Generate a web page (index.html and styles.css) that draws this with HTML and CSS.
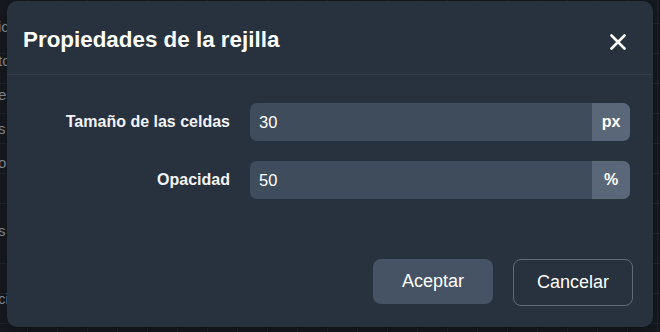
FILE: index.html
```html
<!DOCTYPE html>
<html lang="es">
<head>
<meta charset="utf-8">
<title>Propiedades de la rejilla</title>
<link rel="stylesheet" href="styles.css">
</head>
<body>
<div class="page">
  <ul class="sidebar">
    <li>ic</li>
    <li>to</li>
    <li>es</li>
    <li>s</li>
    <li>or</li>
    <li></li>
    <li>s</li>
    <li></li>
    <li>ció</li>
  </ul>

  <div class="modal" role="dialog" aria-labelledby="dlg-title">
    <div class="modal-header">
      <h2 id="dlg-title" class="modal-title">Propiedades de la rejilla</h2>
      <button class="close-btn" aria-label="Cerrar">
        <svg width="16" height="16" viewBox="0 0 16 16" aria-hidden="true">
          <path d="M1.5 1.5 L14.5 14.5 M14.5 1.5 L1.5 14.5" stroke="#ffffff" stroke-width="2.6" stroke-linecap="round" fill="none"/>
        </svg>
      </button>
    </div>
    <div class="modal-body">
      <label class="field-label" for="cell-size">Tamaño de las celdas</label>
      <div class="input-group">
        <input id="cell-size" class="input" type="text" value="30">
        <span class="addon">px</span>
      </div>
      <label class="field-label" for="opacity">Opacidad</label>
      <div class="input-group">
        <input id="opacity" class="input" type="text" value="50">
        <span class="addon">%</span>
      </div>
    </div>
    <div class="modal-footer">
      <button class="btn btn-primary">Aceptar</button>
      <button class="btn btn-outline">Cancelar</button>
    </div>
  </div>
</div>
</body>
</html>
```

FILE: styles.css
```css
* {
  box-sizing: border-box;
}

html, body {
  margin: 0;
  padding: 0;
}

body {
  width: 660px;
  height: 332px;
  overflow: hidden;
  background-color: #161a20;
  font-family: "Liberation Sans", Arial, sans-serif;
  color: #ffffff;
}

.page {
  position: relative;
  width: 660px;
  height: 332px;
  background-color: #161a20;
  background-image:
    linear-gradient(to right, #1f242c 1px, transparent 1px),
    linear-gradient(to bottom, #20252d 1px, transparent 1px);
  background-size: 30px 30px;
  background-position: 27px 23px;
}

.sidebar {
  list-style: none;
  margin: 0;
  padding: 10px 0 0 0;
  display: flex;
  flex-direction: column;
}

.sidebar li {
  height: 34px;
  line-height: 34px;
  padding-left: 0;
  margin-left: -2px;
  font-size: 15px;
  color: #8a9199;
  white-space: nowrap;
}

.modal {
  position: absolute;
  left: 7px;
  top: 1px;
  width: 646px;
  height: 326px;
  background-color: #28313e;
  border-radius: 10px;
  display: flex;
  flex-direction: column;
  box-shadow: 0 4px 16px rgba(0, 0, 0, 0.35);
}

.modal-header {
  height: 74px;
  flex: none;
  display: flex;
  align-items: flex-start;
  justify-content: space-between;
  padding: 26px 20px 0 16px;
  border-bottom: 1px solid #333d4a;
}

.modal-title {
  margin: 0;
  font-size: 22.4px;
  font-weight: 700;
  line-height: normal;
  color: #ffffff;
}

.close-btn {
  width: 30px;
  height: 30px;
  padding: 0;
  margin: 0;
  border: none;
  background: transparent;
  display: flex;
  align-items: center;
  justify-content: center;
  cursor: pointer;
}

.modal-body {
  display: grid;
  grid-template-columns: 200px 1fr;
  column-gap: 20px;
  row-gap: 20px;
  padding: 28px 23px 0 23px;
  align-items: center;
}

.field-label {
  text-align: right;
  font-size: 16px;
  font-weight: 700;
  color: #f2f4f7;
}

.input-group {
  display: flex;
  height: 38px;
  border-radius: 7px;
  overflow: hidden;
  background-color: #3e4c5c;
}

.input {
  flex: 1;
  min-width: 0;
  height: 38px;
  border: none;
  outline: none;
  background: transparent;
  padding: 0 9px;
  font-family: "Liberation Sans", Arial, sans-serif;
  font-size: 16.5px;
  color: #ffffff;
}

.addon {
  width: 38px;
  flex: none;
  display: flex;
  align-items: center;
  justify-content: center;
  background-color: #5a6779;
  font-size: 16px;
  font-weight: 700;
  color: #ffffff;
}

.modal-footer {
  display: flex;
  justify-content: flex-end;
  align-items: flex-start;
  gap: 20px;
  padding: 60px 20px 0 0;
}

.btn {
  width: 120px;
  height: 45px;
  border-radius: 8px;
  font-family: "Liberation Sans", Arial, sans-serif;
  font-size: 18px;
  color: #ffffff;
  cursor: pointer;
  padding: 0;
}

.btn-primary {
  border: none;
  background-color: #465365;
}

.btn-outline {
  height: 47px;
  border: 1px solid #5f6b7a;
  background: transparent;
}
```
